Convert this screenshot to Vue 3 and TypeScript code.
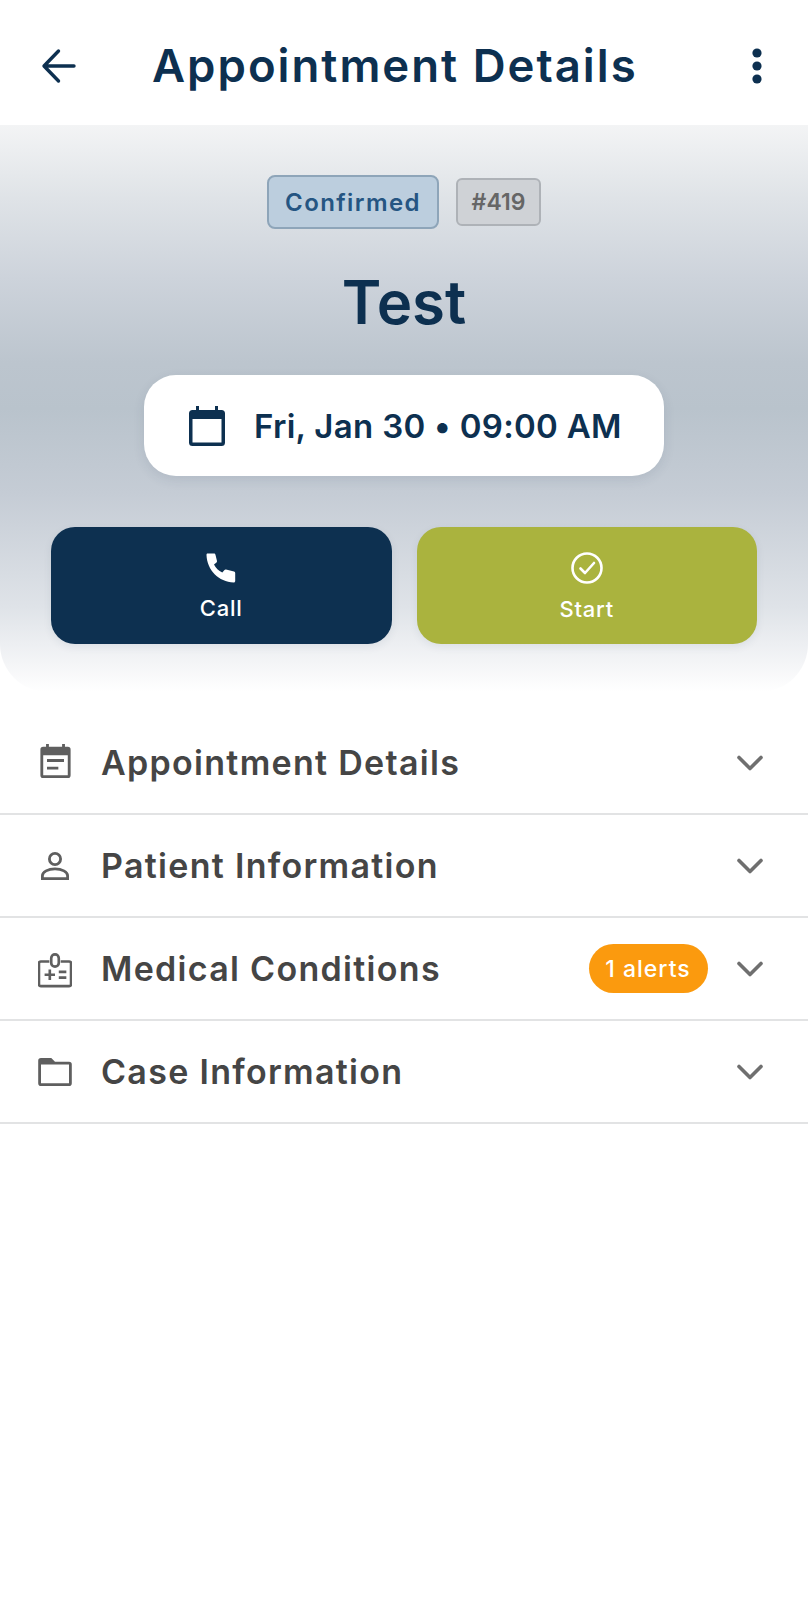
<script setup lang="ts">
interface Row { title: string; icon: string; alert?: string }
const rows: Row[] = [
  { title: 'Appointment Details', icon: 'note' },
  { title: 'Patient Information', icon: 'person' },
  { title: 'Medical Conditions', icon: 'badge', alert: '1 alerts' },
  { title: 'Case Information', icon: 'folder' },
]
</script>

<template>
  <div class="page">
    <header class="topbar">
      <svg class="back" viewBox="0 0 36 36" width="36" height="36" fill="none" stroke="#0d3050" stroke-width="3.4" stroke-linecap="round" stroke-linejoin="round">
        <path d="M33 18H3.500M17.500 3 3 18l14.500 15" />
      </svg>
      <h1 class="title">Appointment Details</h1>
      <svg class="more" viewBox="0 0 10 36" width="10" height="36" fill="#0d3050">
        <circle cx="5" cy="5" r="4.600" /><circle cx="5" cy="18" r="4.600" /><circle cx="5" cy="31" r="4.600" />
      </svg>
    </header>

    <section class="hero">
      <div class="badges">
        <span class="status">Confirmed</span>
        <span class="id">#419</span>
      </div>
      <h2 class="name">Test</h2>
      <div class="when">
        <svg viewBox="0 0 36 40" width="36" height="40" fill="#0d3050">
          <path d="M7 0h3v4h16V0h3v4h3.500A3.500 3.500 0 0 1 36 7.500v29a3.500 3.500 0 0 1-3.500 3.500h-29A3.500 3.500 0 0 1 0 36.500v-29A3.500 3.500 0 0 1 3.500 4H7V0Zm-3.500 13v23.500h29V13h-29Z" />
        </svg>
        <span>Fri, Jan 30 • 09:00 AM</span>
      </div>
      <div class="actions">
        <button class="action call" type="button">
          <svg viewBox="0 0 30 30" width="30" height="30" fill="#fff">
            <path d="M1.500.5H8c.8 0 1.200.4 1.400 1.100L11 8c.1.600-.1 1-.5 1.400L8 11.500c1.800 3.500 4.500 6.300 8.300 8.100l2.200-2.600c.4-.4 1-.6 1.500-.4l8 1.900c.8.200 1.200.7 1.200 1.500v8c0 .9-.6 1.500-1.500 1.500C12.800 29 1 17 .5 2c0-.9.2-1.500 1-1.500Z" />
          </svg>
          <span>Call</span>
        </button>
        <button class="action start" type="button">
          <svg viewBox="0 0 32 32" width="32" height="32" fill="none" stroke="#fff" stroke-width="2.600" stroke-linecap="round" stroke-linejoin="round">
            <circle cx="16" cy="16" r="14.500" /><path d="m9.500 16.500 4.500 4.500 9-10" />
          </svg>
          <span>Start</span>
        </button>
      </div>
    </section>

    <section class="list">
      <div v-for="row in rows" :key="row.title" class="row">
        <span class="icon">
          <svg v-if="row.icon === 'note'" class="i-note" viewBox="0 0 32 36" width="31" height="34" fill="#5f5f5f">
            <path d="M6 0h3v3h14V0h3v3h3a3 3 0 0 1 3 3v27a3 3 0 0 1-3 3H3a3 3 0 0 1-3-3V6a3 3 0 0 1 3-3h3V0ZM3 12v21h26V12H3Z" />
            <path d="M7 16h18v3H7zM7 24h12v3H7z" />
          </svg>
          <svg v-else-if="row.icon === 'person'" viewBox="0 0 30 30" width="28" height="28" fill="none" stroke="#5f5f5f" stroke-width="3">
            <circle cx="15" cy="7.500" r="6" />
            <path d="M1.500 28.500v-3c0-4 6-7.500 13.500-7.500s13.500 3.500 13.500 7.500v3h-27Z" />
          </svg>
          <svg v-else-if="row.icon === 'badge'" class="i-badge" viewBox="0 0 36 36" width="34" height="36" fill="none" stroke="#5f5f5f" stroke-width="2.800">
            <path d="M12 9H3a2 2 0 0 0-2 2v22a2 2 0 0 0 2 2h30a2 2 0 0 0 2-2V11a2 2 0 0 0-2-2h-9" />
            <rect x="14" y="1.500" width="8" height="13" rx="4" />
            <path d="M7 23h11M12.500 17.500v11M22 20h8M22 26h8" />
          </svg>
          <svg v-else viewBox="0 0 36 30" width="34" height="28" fill="#5f5f5f">
            <path d="M3 0h11l4 4h15a3 3 0 0 1 3 3v20a3 3 0 0 1-3 3H3a3 3 0 0 1-3-3V3a3 3 0 0 1 3-3Zm0 7v20h30V7H3Z" />
          </svg>
        </span>
        <span class="row-title">{{ row.title }}</span>
        <span v-if="row.alert" class="alert">{{ row.alert }}</span>
        <svg class="chev" viewBox="0 0 26 16" width="26" height="16" fill="none" stroke="#6f6f6f" stroke-width="3.600" stroke-linecap="round" stroke-linejoin="round">
          <path d="m2 2.500 11 11 11-11" />
        </svg>
      </div>
    </section>
  </div>
</template>

<style>
html, body { margin: 0; background: #fff; }
</style>

<style scoped>
.page {
  width: 808px;
  min-height: 1599px;
  background: #fff;
  font-family: Inter, "Noto Sans", sans-serif;
}
.topbar {
  height: 125px;
  box-sizing: border-box;
  padding: 6px 46px 0 41px;
  display: flex;
  align-items: center;
}
.title {
  flex: 1;
  margin: 0 0 0 75px;
  color: #0d3050;
  font-size: 45.500px;
  font-weight: 600;
  letter-spacing: 2px;
  white-space: nowrap;
}
.hero {
  height: 567px;
  box-sizing: border-box;
  padding-top: 50px;
  border-radius: 0 0 48px 48px;
  background: linear-gradient(180deg, #f3f4f5 0%, #dfe3e7 13%, #cdd3db 27%, #bcc5ce 42%, #b9c3cc 50%, #c5ccd5 65%, #dfe3e8 85%, #f4f5f7 95%, #fff 100%);
  display: flex;
  flex-direction: column;
  align-items: center;
}
.badges { display: flex; align-items: center; gap: 17px; height: 54px; }
.status {
  width: 172px; height: 54px;
  box-sizing: border-box;
  border: 2px solid #8ea5b9;
  border-radius: 8px;
  background: #bccede;
  color: #255582;
  font-size: 24px;
  font-weight: 600;
  letter-spacing: 1.4px;
  display: flex; align-items: center; justify-content: center;
}
.id {
  width: 85px; height: 48px;
  box-sizing: border-box;
  border: 2px solid #aeb2b7;
  border-radius: 6px;
  background: #cfd2d6;
  color: #666;
  font-size: 23px;
  font-weight: 600;
  display: flex; align-items: center; justify-content: center;
}
.name {
  margin: 28px 0 0;
  height: 90px;
  line-height: 90px;
  color: #0d3050;
  font-size: 60px;
  font-weight: 600;
}
.when {
  margin-top: 28px;
  width: 520px; height: 101px;
  box-sizing: border-box;
  padding-left: 45px;
  border-radius: 32px;
  background: #fff;
  box-shadow: 0 4px 12px rgba(40, 60, 85, .1);
  color: #0d3050;
  font-size: 33px;
  font-weight: 600;
  letter-spacing: 0.3px;
  display: flex; align-items: center; gap: 29px;
}
.actions { margin-top: 51px; width: 706px; display: flex; gap: 25px; }
.action {
  flex: 1;
  height: 117px;
  padding: 2px 0 0;
  border: 0;
  border-radius: 24px;
  color: #fff;
  font-family: inherit;
  font-size: 22px;
  font-weight: 500;
  letter-spacing: 0.8px;
  display: flex; flex-direction: column; align-items: center; justify-content: center; gap: 12px;
  box-shadow: 0 3px 8px rgba(40, 60, 85, .08);
}
.call { background: #0d3050; }
.start { background: #aab33e; }
.list { margin-top: 20px; }
.row {
  height: 103px;
  box-sizing: border-box;
  padding: 0 45.500px 0 37px;
  border-bottom: 2px solid #e2e3e4;
  display: flex;
  align-items: center;
}
.icon { width: 36px; display: flex; justify-content: center; flex: none; }
.i-note { margin-bottom: 4px; }
.i-badge { margin-top: 2px; }
.row-title {
  margin-left: 28px;
  flex: 1;
  color: #454545;
  font-size: 34px;
  font-weight: 600;
  letter-spacing: 1.3px;
}
.alert {
  margin-right: 29px;
  width: 119px; height: 49px;
  border-radius: 25px;
  background: #fb9a0e;
  color: #fff;
  font-size: 23px;
  font-weight: 500;
  letter-spacing: 1px;
  display: flex; align-items: center; justify-content: center;
}
.chev { flex: none; }
</style>
